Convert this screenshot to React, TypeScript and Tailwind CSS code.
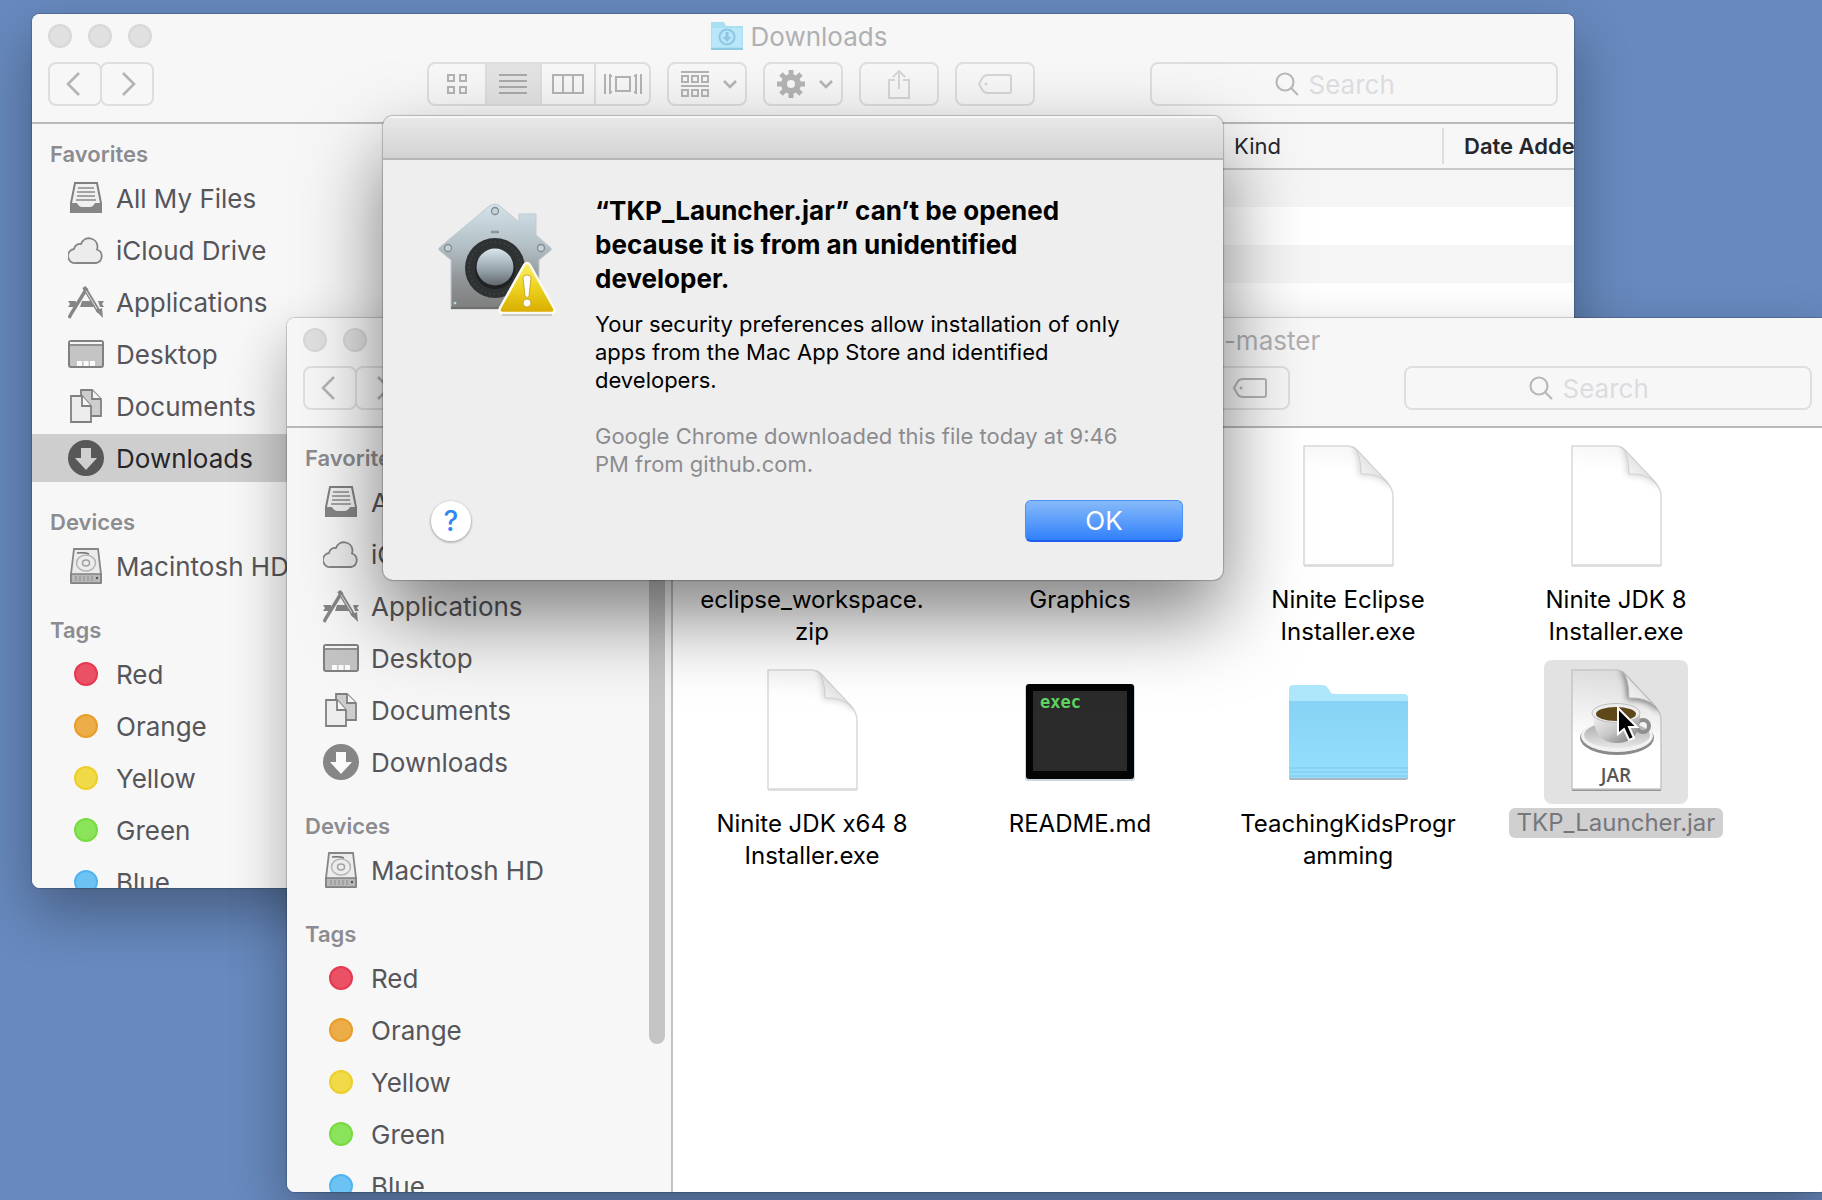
import type { ReactNode } from 'react';
import clsx from 'clsx';

/* ---------- toolbar glyphs ---------- */

function Chevron({ flip = false }: { flip?: boolean }) {
  return (
    <svg width="14" height="24" viewBox="0 0 14 24" fill="none" stroke="#b4b4b4" strokeWidth="2.6">
      <path d={flip ? 'M1 1l11 11L1 23' : 'M13 1L2 12l11 11'} />
    </svg>
  );
}

function GridGlyph() {
  return (
    <svg width="20" height="20" viewBox="0 0 20 20" fill="none" stroke="#b4b4b4" strokeWidth="2">
      <path d="M1 1h6v6H1zM13 1h6v6h-6zM1 13h6v6H1zM13 13h6v6h-6z" />
    </svg>
  );
}

function ListGlyph() {
  return (
    <svg width="28" height="20" viewBox="0 0 28 20" stroke="#a9a9a9" strokeWidth="2">
      <path d="M0 1h28M0 7h28M0 13h28M0 19h28" />
    </svg>
  );
}

function ColumnsGlyph() {
  return (
    <svg width="32" height="20" viewBox="0 0 32 20" fill="none" stroke="#b4b4b4" strokeWidth="2">
      <path d="M1 1h30v18H1zM11 1v18M21 1v18" />
    </svg>
  );
}

function CoverFlowGlyph() {
  return (
    <svg width="38" height="20" viewBox="0 0 38 20" fill="none" stroke="#b4b4b4" strokeWidth="2">
      <path d="M1 0v20M6 0v20M5 2h3M5 18h3M12 3h14v14H12zM32 0v20M30 2h3M30 18h3M37 0v20" />
    </svg>
  );
}

function ArrangeGlyph() {
  return (
    <svg width="28" height="28" viewBox="0 0 28 28" fill="none" stroke="#b4b4b4" strokeWidth="2">
      <path d="M0 2h28M0 16h28M1 6h6v6H1zM11 6h6v6h-6zM21 6h6v6h-6zM1 20h6v6H1zM11 20h6v6h-6zM21 20h6v6h-6z" />
    </svg>
  );
}

function GearGlyph() {
  return (
    <svg width="28" height="28" viewBox="0 0 28 28" fill="none" stroke="#b4b4b4">
      <circle cx="14" cy="14" r="7" strokeWidth="6" />
      <g strokeWidth="5">
        <path d="M14 0v6M14 22v6M0 14h6M22 14h6" />
        <path d="M4 4l5 5M19 19l5 5M24 4l-5 5M9 19l-5 5" />
      </g>
    </svg>
  );
}

function DownCaret() {
  return (
    <svg width="14" height="9" viewBox="0 0 14 9" fill="none" stroke="#b4b4b4" strokeWidth="2.6">
      <path d="M1 1l6 6 6-6" />
    </svg>
  );
}

function ShareGlyph({ color }: { color: string }) {
  return (
    <svg width="24" height="30" viewBox="0 0 24 30" fill="none" stroke={color} strokeWidth="2">
      <path d="M8 11H2v18h20V11h-6M12 20V2M6 8l6-6 6 6" />
    </svg>
  );
}

function TagGlyph({ color }: { color: string }) {
  return (
    <svg width="34" height="20" viewBox="0 0 34 20" fill="none" stroke={color} strokeWidth="2">
      <path d="M10 1h21a2 2 0 0 1 2 2v14a2 2 0 0 1-2 2H10Q7 19 5 17L1 10l4-7q2-2 5-2z" />
      <circle cx="8" cy="10" r="1.5" fill={color} stroke="none" />
    </svg>
  );
}

function Magnifier() {
  return (
    <svg className="shrink-0" width="24" height="24" viewBox="0 0 24 24" fill="none" stroke="#b8b8b8" strokeWidth="2.2">
      <circle cx="10" cy="10" r="8.5" />
      <path d="M16 16l7 7" />
    </svg>
  );
}

function TitleFolder() {
  return (
    <svg width="32" height="30" viewBox="0 0 32 30">
      <path d="M0 2q0-1 1-1h12l2 4h16q1 0 1 1v22H0z" fill="#a9dff2" />
      <path d="M1 7h30v19H1z" fill="#b9e6f8" />
      <path d="M0 27h32v2H0z" fill="#8fcbe2" />
      <circle cx="16" cy="16" r="7.5" fill="none" stroke="#8cc7e4" strokeWidth="2" />
      <path d="M14.5 11h3v5h3L16 21l-4.500-5h3z" fill="#8cc7e4" />
    </svg>
  );
}

/* ---------- sidebar icons ---------- */

function AllFilesIcon() {
  return (
    <svg width="36" height="36" viewBox="0 0 36 36">
      <path d="M7 3h22l4 20v9H3v-9z" fill="#f0f0f0" stroke="#808080" strokeWidth="2" />
      <path d="M10 8h16M9 12h18M9 16h18M8 20h20" stroke="#8a8a8a" strokeWidth="1.6" />
      <path d="M3 23h6q2 4 5 4h8q3 0 5-4h6v10H3z" fill="#868686" />
    </svg>
  );
}

function CloudIcon() {
  return (
    <svg width="36" height="36" viewBox="0 0 36 36">
      <path
        d="M8 31a7 7 0 0 1-2-14 6 6 0 0 1 7-5A8.5 8.5 0 0 1 29.5 14q0 2-.5 3.5A7 7 0 0 1 28 31z"
        fill="#ececec"
        stroke="#868686"
        strokeWidth="1.8"
      />
    </svg>
  );
}

function ApplicationsIcon() {
  return (
    <svg width="36" height="36" viewBox="0 0 36 36" fill="none" stroke="#868686">
      <path d="M0 17h8v6H0l2-3zM14 17h9l3 6H12zM30 17h6l-2 3 2 3h-4z" fill="#868686" stroke="none" />
      <path d="M19 4L3 30l-2 4" strokeWidth="3.4" />
      <path d="M16 3l15 25" strokeWidth="4" />
      <path d="M18 7l11 18" stroke="#e4e4e4" strokeWidth="1" />
      <path d="M28 27l6-3 1 10z" fill="#868686" stroke="none" />
    </svg>
  );
}

function DesktopIcon() {
  return (
    <svg width="36" height="36" viewBox="0 0 36 36">
      <rect x="1" y="5" width="34" height="26" rx="2" fill="#c4c4c4" stroke="#808080" strokeWidth="2" />
      <path d="M2 6h32v2H2z" fill="#f7f7f7" />
      <path d="M1 9h34" stroke="#808080" strokeWidth="1.5" />
      <path d="M9 25h5v5H9zM15.5 25h5v5h-5zM22 25h5v5h-5z" fill="#fbfbfb" />
    </svg>
  );
}

function DocumentsIcon() {
  return (
    <svg width="36" height="36" viewBox="0 0 36 36" stroke="#808080" strokeWidth="1.8">
      <path d="M13 2h11l9 9v17H13z" fill="#cdcdcd" />
      <path d="M24 2v9h9" fill="#f4f4f4" />
      <path d="M3 8h11l9 10v16H3z" fill="#ededed" />
      <path d="M14 8v10h9" fill="#f7f7f7" />
    </svg>
  );
}

function DownloadsIcon({ active = false }: { active?: boolean }) {
  return (
    <svg width="36" height="36" viewBox="0 0 36 36">
      <circle cx="18" cy="18" r="18" fill={active ? '#585858' : '#868686'} />
      <path d="M13 8h10v10h6L18 30 7 18h6z" fill={active ? '#d0d0d0' : '#fbfbfb'} />
    </svg>
  );
}

function DiskIcon() {
  return (
    <svg width="36" height="36" viewBox="0 0 36 36">
      <path d="M6 1h24l3 25v8q0 1-1 1H4q-1 0-1-1v-8z" fill="#ececec" stroke="#868686" strokeWidth="1.8" />
      <path d="M3 26h30v9H3z" fill="#b8b8b8" stroke="#808080" strokeWidth="1.6" />
      <path d="M8 28v5M12 28v5M16 28v5M20 28v5M24 28v5" stroke="#8c8c8c" />
      <circle cx="29" cy="30" r="1.2" fill="#555" />
      <path d="M9 5q8-1 12 1" fill="none" stroke="#707070" strokeWidth="1.5" />
      <ellipse cx="18" cy="15" rx="9.5" ry="8" fill="none" stroke="#b5b5b5" strokeWidth="1.5" />
      <ellipse cx="18" cy="15" rx="3.5" ry="3" fill="none" stroke="#a0a0a0" strokeWidth="1.5" />
    </svg>
  );
}

const TAGS = [
  { name: 'Red', color: 'bg-[#eb5165] border-[#e6394f]' },
  { name: 'Orange', color: 'bg-[#ecac48] border-[#e99e29]' },
  { name: 'Yellow', color: 'bg-[#f1da48] border-[#ecd029]' },
  { name: 'Green', color: 'bg-[#8be25b] border-[#76dc3f]' },
  { name: 'Blue', color: 'bg-[#6cc2f3] border-[#50b5ef]' },
];

/* ---------- sidebar ---------- */

function SidebarItem({ icon, label, active = false }: { icon: ReactNode; label: string; active?: boolean }) {
  return (
    <li>
      <a
        href="#"
        className={clsx(
          'flex h-12 items-center gap-3 pl-9 text-[26px] whitespace-nowrap',
          active ? 'bg-[#cecece] text-[#26262a]' : 'text-[#55555a]',
        )}
      >
        <span className="flex w-9 shrink-0 justify-center">{icon}</span>
        {label}
      </a>
    </li>
  );
}

function SidebarSection({ title, children }: { title: string; children: ReactNode }) {
  return (
    <section className="mb-[26px]">
      <h2 className="mb-2 pt-0.5 pl-[18px] text-[22px] leading-6 font-semibold text-[#8c8c90]">{title}</h2>
      <ul className="flex flex-col gap-1">{children}</ul>
    </section>
  );
}

function Sidebar({ downloadsActive = false, scrollbar = false }: { downloadsActive?: boolean; scrollbar?: boolean }) {
  return (
    <nav className="relative w-[386px] shrink-0 overflow-hidden border-r-2 border-[#c2c2c2] bg-[#f7f7f7] pt-4">
      <SidebarSection title="Favorites">
        <SidebarItem icon={<AllFilesIcon />} label="All My Files" />
        <SidebarItem icon={<CloudIcon />} label="iCloud Drive" />
        <SidebarItem icon={<ApplicationsIcon />} label="Applications" />
        <SidebarItem icon={<DesktopIcon />} label="Desktop" />
        <SidebarItem icon={<DocumentsIcon />} label="Documents" />
        <SidebarItem icon={<DownloadsIcon active={downloadsActive} />} label="Downloads" active={downloadsActive} />
      </SidebarSection>
      <SidebarSection title="Devices">
        <SidebarItem icon={<DiskIcon />} label="Macintosh HD" />
      </SidebarSection>
      <SidebarSection title="Tags">
        {TAGS.map((tag) => (
          <SidebarItem
            key={tag.name}
            icon={<span className={clsx('size-6 rounded-full border-2', tag.color)} />}
            label={tag.name}
          />
        ))}
      </SidebarSection>
      {scrollbar && <div className="absolute top-1 right-1.5 h-[612px] w-4 rounded-full bg-[#c5c5c5]" />}
    </nav>
  );
}

/* ---------- window chrome ---------- */

const toolButton = 'flex h-11 w-20 items-center justify-center rounded-lg border-2 border-[#dedede]';
const navButton = 'flex h-11 w-[54px] items-center justify-center rounded-lg border-2 border-[#dedede]';

function Toolbar({ hasSelection, id }: { hasSelection: boolean; id: string }) {
  const actionColor = hasSelection ? '#b4b4b4' : '#d6d6d6';
  return (
    <div className="flex items-center gap-4 px-4">
      <div className="mr-[257px] flex">
        <button type="button" aria-label="Back" className={clsx(navButton, 'pr-1')}>
          <Chevron />
        </button>
        <button type="button" aria-label="Forward" className={clsx(navButton, '-ml-0.5 pl-1')}>
          <Chevron flip />
        </button>
      </div>
      <div className="flex h-11 w-56 shrink-0 divide-x-2 divide-[#dedede] overflow-hidden rounded-lg border-2 border-[#dedede]">
        <button type="button" aria-label="Icon view" className="flex w-[58px] items-center justify-center">
          <GridGlyph />
        </button>
        <button type="button" aria-label="List view" className="flex flex-1 items-center justify-center bg-[#e3e3e3]">
          <ListGlyph />
        </button>
        <button type="button" aria-label="Column view" className="flex flex-1 items-center justify-center">
          <ColumnsGlyph />
        </button>
        <button type="button" aria-label="Cover flow" className="flex flex-1 items-center justify-center">
          <CoverFlowGlyph />
        </button>
      </div>
      <button type="button" aria-label="Arrange" className={clsx(toolButton, 'gap-3.5 pl-1')}>
        <ArrangeGlyph />
        <DownCaret />
      </button>
      <button type="button" aria-label="Actions" className={clsx(toolButton, 'gap-3.5 pl-1')}>
        <GearGlyph />
        <DownCaret />
      </button>
      <button type="button" aria-label="Share" className={toolButton}>
        <ShareGlyph color={actionColor} />
      </button>
      <button type="button" aria-label="Edit tags" className={toolButton}>
        <TagGlyph color={actionColor} />
      </button>
      <label
        htmlFor={id}
        aria-label="Search"
        className="ml-auto flex h-11 w-[408px] items-center justify-center gap-2.5 rounded-lg border-2 border-[#dedede]"
      >
        <Magnifier />
        <input
          id={id}
          type="text"
          placeholder="Search"
          className="w-[125px] bg-transparent text-[26px] outline-none placeholder:text-[#dcdce0]"
        />
      </label>
    </div>
  );
}

interface FinderWindowProps {
  id: string;
  title: ReactNode;
  className: string;
  hasSelection?: boolean;
  children: ReactNode;
}

function FinderWindow({ id, title, className, hasSelection = false, children }: FinderWindowProps) {
  return (
    <section
      className={clsx(
        'absolute flex flex-col overflow-hidden rounded-lg bg-white shadow-[0_0_1px_1px_rgba(0,0,0,0.18),0_24px_56px_rgba(0,0,0,0.32)]',
        className,
      )}
    >
      <header className="h-[110px] shrink-0 border-b-2 border-[#b9b9b9] bg-[#f7f7f7]">
        <div className="relative mb-1 flex h-11 items-center justify-center">
          <div className="absolute left-4 flex gap-4">
            <span className="size-6 rounded-full border-2 border-[#d8d8d8] bg-[#e0e0e0]" />
            <span className="size-6 rounded-full border-2 border-[#d8d8d8] bg-[#e0e0e0]" />
            <span className="size-6 rounded-full border-2 border-[#d8d8d8] bg-[#e0e0e0]" />
          </div>
          <h1 className="flex items-center gap-2 pr-2 text-[26px] whitespace-nowrap text-[#b0b0b3]">{title}</h1>
        </div>
        <Toolbar id={id} hasSelection={hasSelection} />
      </header>
      <div className="flex min-h-0 flex-1">{children}</div>
    </section>
  );
}

/* ---------- list view ---------- */

function EmptyFileList() {
  return (
    <div className="min-w-0 flex-1 overflow-hidden">
      <table className="w-[1280px] table-fixed border-collapse text-left">
        <colgroup>
          <col />
          <col className="w-[230px]" />
          <col className="w-[256px]" />
        </colgroup>
        <thead>
          <tr className="h-[45px] border-b-2 border-[#c8c8c8] bg-[#f7f7f7] text-[22px] text-[#26262a]">
            <th aria-label="Name" />
            <th className="p-0 font-normal">
              <span className="flex h-9 items-center border-l-2 border-[#dedede] pl-5">Kind</span>
            </th>
            <th className="p-0 font-semibold">
              <span className="flex h-9 items-center border-l-2 border-[#dedede] pl-5">Date Added</span>
            </th>
          </tr>
        </thead>
        <tbody>
          {Array.from({ length: 19 }, (_, i) => (
            <tr key={i} className="h-[38px] odd:bg-[#f5f5f5]">
              <td colSpan={3} />
            </tr>
          ))}
        </tbody>
      </table>
    </div>
  );
}

/* ---------- icon view ---------- */

const SHEET = 'M28 10h43q6 0 10 4l30 32q6 7 6 14v69H28z';

function BlankDocument({ shade = false, children }: { shade?: boolean; children?: ReactNode }) {
  const pageId = shade ? 'page-shade' : 'page';
  return (
    <svg width="144" height="144" viewBox="0 0 144 144">
      <defs>
        <linearGradient id={pageId} x1="0.3" y1="0" x2="0.2" y2="1">
          <stop offset="0" stopColor={shade ? '#dcdcdc' : '#f7f7f7'} />
          <stop offset={shade ? '0.6' : '0.2'} stopColor="#fff" />
        </linearGradient>
        <linearGradient id="curl" x1="1" y1="0" x2="0" y2="1">
          <stop offset="0.45" stopColor="#e2e2e2" />
          <stop offset="1" stopColor="#fff" />
        </linearGradient>
        <filter id="soft" x="-0.5" y="-0.5" width="2" height="2">
          <feGaussianBlur stdDeviation="3" />
        </filter>
        <clipPath id="sheet">
          <path d={SHEET} />
        </clipPath>
      </defs>
      <g transform="translate(0 2)">
        <path d={SHEET} fill="#000" opacity={shade ? 0.35 : 0.12} />
      </g>
      <path d={SHEET} fill={`url(#${pageId})`} stroke={shade ? '#c6c6c6' : '#d9d9d9'} strokeWidth="1.5" />
      <g clipPath="url(#sheet)">
        <path d="M76 10q7 6 7 30 20-2 32 12V10z" fill="#000" opacity={shade ? 0.5 : 0.16} filter="url(#soft)" />
      </g>
      <path d="M78 11q7 7 7 27 16-1 26 8z" fill="url(#curl)" stroke={shade ? '#b8b8b8' : '#d0d0d0'} />
      {children}
    </svg>
  );
}

function JarDocument() {
  return (
    <BlankDocument shade>
      <defs>
        <linearGradient id="cup" x1="0" y1="0" x2="1" y2="1">
          <stop offset="0" stopColor="#f4f4f4" />
          <stop offset="0.5" stopColor="#c9c9c9" />
          <stop offset="1" stopColor="#6f6f6f" />
        </linearGradient>
        <linearGradient id="saucer" x1="0" y1="0" x2="0" y2="1">
          <stop offset="0" stopColor="#a8a8a8" />
          <stop offset="1" stopColor="#e8e8e8" />
        </linearGradient>
      </defs>
      <ellipse cx="73" cy="78" rx="37" ry="17" fill="#8a8a8a" />
      <ellipse cx="73" cy="76" rx="36" ry="16" fill="#f2f2f2" />
      <ellipse cx="73" cy="75" rx="33" ry="13" fill="url(#saucer)" />
      <circle cx="99" cy="66" r="6" fill="none" stroke="#8f8f8f" strokeWidth="4" />
      <path d="M49 53q0 30 24 30t23-30z" fill="url(#cup)" />
      <ellipse cx="72" cy="53" rx="24" ry="9.5" fill="#ededed" stroke="#bdbdbd" />
      <ellipse cx="72" cy="54" rx="20" ry="7" fill="#5f4719" />
      <text x="72" y="122" textAnchor="middle" fontFamily="Open Sans, sans-serif" fontWeight="600" fontSize="19" fill="#555">
        JAR
      </text>
    </BlankDocument>
  );
}

function ExecFile() {
  return (
    <svg width="144" height="144" viewBox="0 0 144 144">
      <rect x="17" y="25" width="110" height="96" rx="3" fill="#cfd8de" />
      <rect x="18" y="24" width="108" height="95" rx="3" fill="#050505" />
      <rect x="25" y="31" width="94" height="80" fill="#2b2b2b" />
      <text x="32" y="48" fontFamily="DejaVu Sans Mono, monospace" fontWeight="700" fontSize="17" fill="#5fd35f">
        exec
      </text>
    </svg>
  );
}

function FolderIcon() {
  return (
    <svg width="144" height="144" viewBox="0 0 144 144">
      <defs>
        <linearGradient id="folder" x1="0" y1="0" x2="0" y2="1">
          <stop offset="0" stopColor="#86d3f5" />
          <stop offset="1" stopColor="#96dffd" />
        </linearGradient>
      </defs>
      <path d="M13 90h119v28q0 2-2 2H15q-2 0-2-2z" fill="#a9b8c0" />
      <path d="M13 29q0-4 4-4h30q3 0 5 3l3 5q1 1 3 1h70q4 0 4 4v77q0 3-3 3H16q-3 0-3-3z" fill="#aee6fb" />
      <path d="M13 41h119v74q0 3-3 3H16q-3 0-3-3z" fill="url(#folder)" />
      <path d="M13 108h119M13 112h119M14 116h117" stroke="#7fc8e6" />
    </svg>
  );
}

function ArchiveIcon() {
  return (
    <BlankDocument>
      <path d="M72 12v60" stroke="#c9a227" strokeWidth="6" strokeDasharray="4 3" />
    </BlankDocument>
  );
}

const FILES = [
  { label: 'eclipse_workspace.zip', lines: ['eclipse_workspace.', 'zip'], icon: <ArchiveIcon /> },
  { label: 'Graphics', lines: ['Graphics'], icon: <FolderIcon /> },
  { label: 'Ninite Eclipse Installer.exe', lines: ['Ninite Eclipse', 'Installer.exe'], icon: <BlankDocument /> },
  { label: 'Ninite JDK 8 Installer.exe', lines: ['Ninite JDK 8', 'Installer.exe'], icon: <BlankDocument /> },
  { label: 'Ninite JDK x64 8 Installer.exe', lines: ['Ninite JDK x64 8', 'Installer.exe'], icon: <BlankDocument /> },
  { label: 'README.md', lines: ['README.md'], icon: <ExecFile /> },
  { label: 'TeachingKidsProgramming', lines: ['TeachingKidsProgr', 'amming'], icon: <FolderIcon /> },
  { label: 'TKP_Launcher.jar', lines: ['TKP_Launcher.jar'], icon: <JarDocument />, selected: true },
];

function Pointer() {
  return (
    <svg className="absolute top-[46px] left-[72px]" width="24" height="36" viewBox="0 0 24 36">
      <path d="M2 2v26l6-5 5 11 5-2-5-11h8z" fill="#000" stroke="#fff" strokeWidth="2" />
    </svg>
  );
}

function FileGrid() {
  return (
    <ul className="grid min-w-0 flex-1 grid-cols-[repeat(auto-fill,268px)] content-start gap-y-3 overflow-hidden pt-2 pl-[5px]">
      {FILES.map((file) => (
        <li key={file.label} className="flex h-[212px] flex-col items-center">
          <div className={clsx('relative size-36 rounded-lg', file.selected && 'bg-[#e2e2e2]')}>
            {file.icon}
            {file.selected && <Pointer />}
          </div>
          <p
            className={clsx(
              'mt-1 rounded-md text-center text-[24px] whitespace-nowrap',
              file.selected ? 'bg-[#d0d0d0] px-2 leading-[30px] text-[#77777b]' : 'leading-8 text-black',
            )}
          >
            {file.lines.map((line) => (
              <span key={line} className="block">
                {line}
              </span>
            ))}
          </p>
        </li>
      ))}
    </ul>
  );
}

/* ---------- alert ---------- */

function GatekeeperIcon() {
  return (
    <svg className="shrink-0" width="128" height="128" viewBox="0 0 128 128">
      <defs>
        <linearGradient id="house" x1="0" y1="0" x2="0" y2="1">
          <stop offset="0" stopColor="#d3e3ea" />
          <stop offset="0.4" stopColor="#b3c0c6" />
          <stop offset="0.7" stopColor="#929799" />
          <stop offset="1" stopColor="#7d7d7d" />
        </linearGradient>
        <linearGradient id="knob" x1="0" y1="0" x2="0" y2="1">
          <stop offset="0" stopColor="#d9e6ee" />
          <stop offset="0.6" stopColor="#93a0a8" />
          <stop offset="1" stopColor="#62686c" />
        </linearGradient>
        <linearGradient id="caution" x1="0" y1="0" x2="0" y2="1">
          <stop offset="0" stopColor="#fbf06a" />
          <stop offset="0.5" stopColor="#ecd21e" />
          <stop offset="1" stopColor="#d9ac00" />
        </linearGradient>
      </defs>
      <path
        d="M64 10q3 0 6 3l18 15V20h17v21l14 12q3 2 0 4l-11 9v49H20V66L9 57q-3-2 0-4l48-40q4-3 7-3z"
        fill="url(#house)"
        stroke="#c3c9cc"
      />
      <path d="M20 114h88" stroke="#6e6e6e" strokeWidth="2" />
      <g fill="#c5d3d9" stroke="#7f8b91" strokeWidth="1.3">
        <circle cx="64" cy="17" r="3.5" />
        <circle cx="17" cy="54" r="3.5" />
        <circle cx="110" cy="54" r="3.5" />
        <circle cx="24" cy="109" r="2" />
      </g>
      <path d="M60 38h8" stroke="#8b969b" strokeWidth="2.5" />
      <circle cx="64" cy="74" r="30" fill="#2f3233" />
      <circle cx="64" cy="74" r="26" fill="none" stroke="#3d4143" strokeWidth="2" strokeDasharray="1.5 3" />
      <circle cx="64" cy="75" r="20" fill="#1f2122" />
      <circle cx="64" cy="73" r="18.5" fill="url(#knob)" />
      <path
        d="M96 69q2 0 3 2l24 43q2 5-3 5H72q-5 0-3-5l24-43q1-2 3-2z"
        fill="url(#caution)"
        stroke="#fbfbf3"
        strokeWidth="2.5"
      />
      <path d="M71 121h50" stroke="#bdbdbd" strokeWidth="1.5" />
      <path d="M92 84q0-3 4-3t4 3l-2 18q-2 3-4 0z" fill="#fff" stroke="#c19a10" strokeWidth="0.8" />
      <circle cx="96" cy="109" r="4" fill="#fff" stroke="#c19a10" strokeWidth="0.8" />
    </svg>
  );
}

function SecurityAlert() {
  return (
    <div
      role="alertdialog"
      aria-labelledby="alert-title"
      className="absolute top-[116px] left-[383px] w-[840px] overflow-hidden rounded-[10px] bg-[#eeeeee] shadow-[0_0_1px_1px_rgba(0,0,0,0.22),0_36px_80px_rgba(0,0,0,0.5)]"
    >
      <div className="h-11 border-t-2 border-b-2 border-t-[#f6f6f6] border-b-[#b6b6b6] bg-linear-to-b from-[#e8e8e8] to-[#d3d3d3]" />
      <div className="flex gap-9 pt-[34px] pr-20 pl-12">
        <GatekeeperIcon />
        <div className="text-[22px] leading-7">
          <h2 id="alert-title" className="text-[26px] leading-[34px] font-bold text-black">
            “TKP_Launcher.jar” can’t be opened because it is from an unidentified developer.
          </h2>
          <p className="mt-3.5 text-black">
            Your security preferences allow installation of only apps from the Mac App Store and identified developers.
          </p>
          <p className="mt-7 text-[#8c8c90]">Google Chrome downloaded this file today at 9:46 PM from github.com.</p>
        </div>
      </div>
      <div className="mt-[22px] flex items-center justify-between px-10 pb-[38px]">
        <button
          type="button"
          aria-label="Help"
          className="ml-2 size-10 rounded-full bg-white text-[28px] leading-10 font-medium text-[#2f86f6] shadow-[0_1px_2px_1px_rgba(0,0,0,0.22)]"
        >
          ?
        </button>
        <button
          type="button"
          className="h-[42px] w-[158px] rounded-md border border-b-2 border-[#4a90f5] border-b-[#1f5cf0] bg-linear-to-b from-[#86b9f8] to-[#2f80fb] text-[26px] leading-9 text-white"
        >
          OK
        </button>
      </div>
    </div>
  );
}

export default function App() {
  return (
    <main className="relative h-screen overflow-hidden bg-[#6789be] font-['Inter','Liberation_Sans',sans-serif]">
      <FinderWindow
        id="search-downloads"
        className="top-3.5 right-[248px] bottom-[312px] left-8"
        title={
          <>
            <TitleFolder />
            Downloads
          </>
        }
      >
        <Sidebar downloadsActive />
        <EmptyFileList />
      </FinderWindow>

      <FinderWindow
        id="search-project"
        className="top-[318px] -right-1.5 bottom-2 left-[287px]"
        hasSelection
        title={
          <>
            <TitleFolder />
            TeachingKidsProgramming.Java-master
          </>
        }
      >
        <Sidebar scrollbar />
        <FileGrid />
      </FinderWindow>

      <SecurityAlert />
    </main>
  );
}
